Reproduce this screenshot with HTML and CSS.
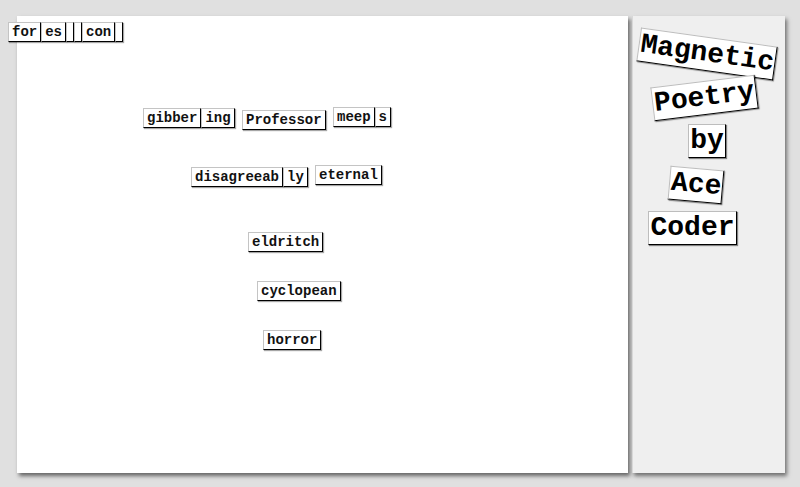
FILE: index.html
```html
<!DOCTYPE html>
<html>
<head>
<meta charset="utf-8">
<link rel="stylesheet" href="styles.css">
</head>
<body>
<div class="page">
  <div class="board"></div>
  <div class="sidebar">
    <div class="title-tile t-magnetic">Magnetic</div>
    <div class="title-tile t-poetry">Poetry</div>
    <div class="title-tile t-by">by</div>
    <div class="title-tile t-ace">Ace</div>
    <div class="title-tile t-coder">Coder</div>
  </div>
</div>
<div class="magnets">
  <div class="group" style="left:8px;top:22px"><span class="tile">for</span><span class="tile">es</span><span class="tile empty"></span><span class="tile empty"></span><span class="tile">con</span><span class="tile empty"></span></div>
  <div class="group" style="left:143px;top:108px"><span class="tile">gibber</span><span class="tile">ing</span></div>
  <div class="group" style="left:242px;top:110px"><span class="tile">Professor</span></div>
  <div class="group" style="left:333px;top:107px"><span class="tile">meep</span><span class="tile">s</span></div>
  <div class="group" style="left:191px;top:167px"><span class="tile">disagreeab</span><span class="tile">ly</span></div>
  <div class="group" style="left:315px;top:165px"><span class="tile">eternal</span></div>
  <div class="group" style="left:248px;top:232px"><span class="tile">eldritch</span></div>
  <div class="group" style="left:257px;top:281px"><span class="tile">cyclopean</span></div>
  <div class="group" style="left:263px;top:330px"><span class="tile">horror</span></div>
</div>
</body>
</html>
```

FILE: styles.css
```css
html, body {
  margin: 0;
  padding: 0;
}
body {
  background: #e0e0e0;
  width: 800px;
  height: 487px;
  overflow: hidden;
  position: relative;
  font-family: "Courier New", "Nimbus Mono PS", "FreeMono", "Liberation Mono", monospace;
}
.page {
  display: flex;
  gap: 4px;
  padding: 16px 0 0 17px;
}
.board {
  width: 611px;
  height: 457px;
  background: #ffffff;
  box-shadow: 2px 3px 4px rgba(0, 0, 0, 0.55);
}
.sidebar {
  width: 153px;
  height: 457px;
  background: #efefef;
  box-shadow: 2px 3px 4px rgba(0, 0, 0, 0.5), inset 1px 0 0 #d8d8d8;
  display: flex;
  flex-direction: column;
  align-items: center;
  gap: 9.5px;
  padding-top: 21px;
  box-sizing: border-box;
}
.title-tile {
  font-size: 28px;
  font-weight: bold;
  line-height: 32px;
  padding: 0 1px;
  background: #ffffff;
  color: #000;
  border-style: solid;
  border-width: 1px;
  border-color: #bdbdbd #000 #000 #bdbdbd;
  box-shadow: 1px 1px 1px rgba(0, 0, 0, 0.45);
}
.t-magnetic { transform: rotate(8deg); margin-left: -2px; }
.t-poetry { transform: rotate(-7deg); margin-left: -8px; }
.t-by { margin-left: -3px; }
.t-ace { transform: rotate(5deg); margin-left: -24px; }
.t-coder { margin-left: -32px; }

.magnets {
  position: absolute;
  left: 0;
  top: 0;
  width: 800px;
  height: 487px;
}
.group {
  position: absolute;
  display: flex;
}
.tile {
  display: block;
  font-size: 14px;
  font-weight: bold;
  line-height: 18px;
  height: 18px;
  padding: 0 3px;
  background: #ffffff;
  color: #111;
  border-style: solid;
  border-width: 1px;
  border-color: #c4c4c4 #000 #000 #c4c4c4;
  box-shadow: 1px 1px 1px rgba(0, 0, 0, 0.35);
}
```
